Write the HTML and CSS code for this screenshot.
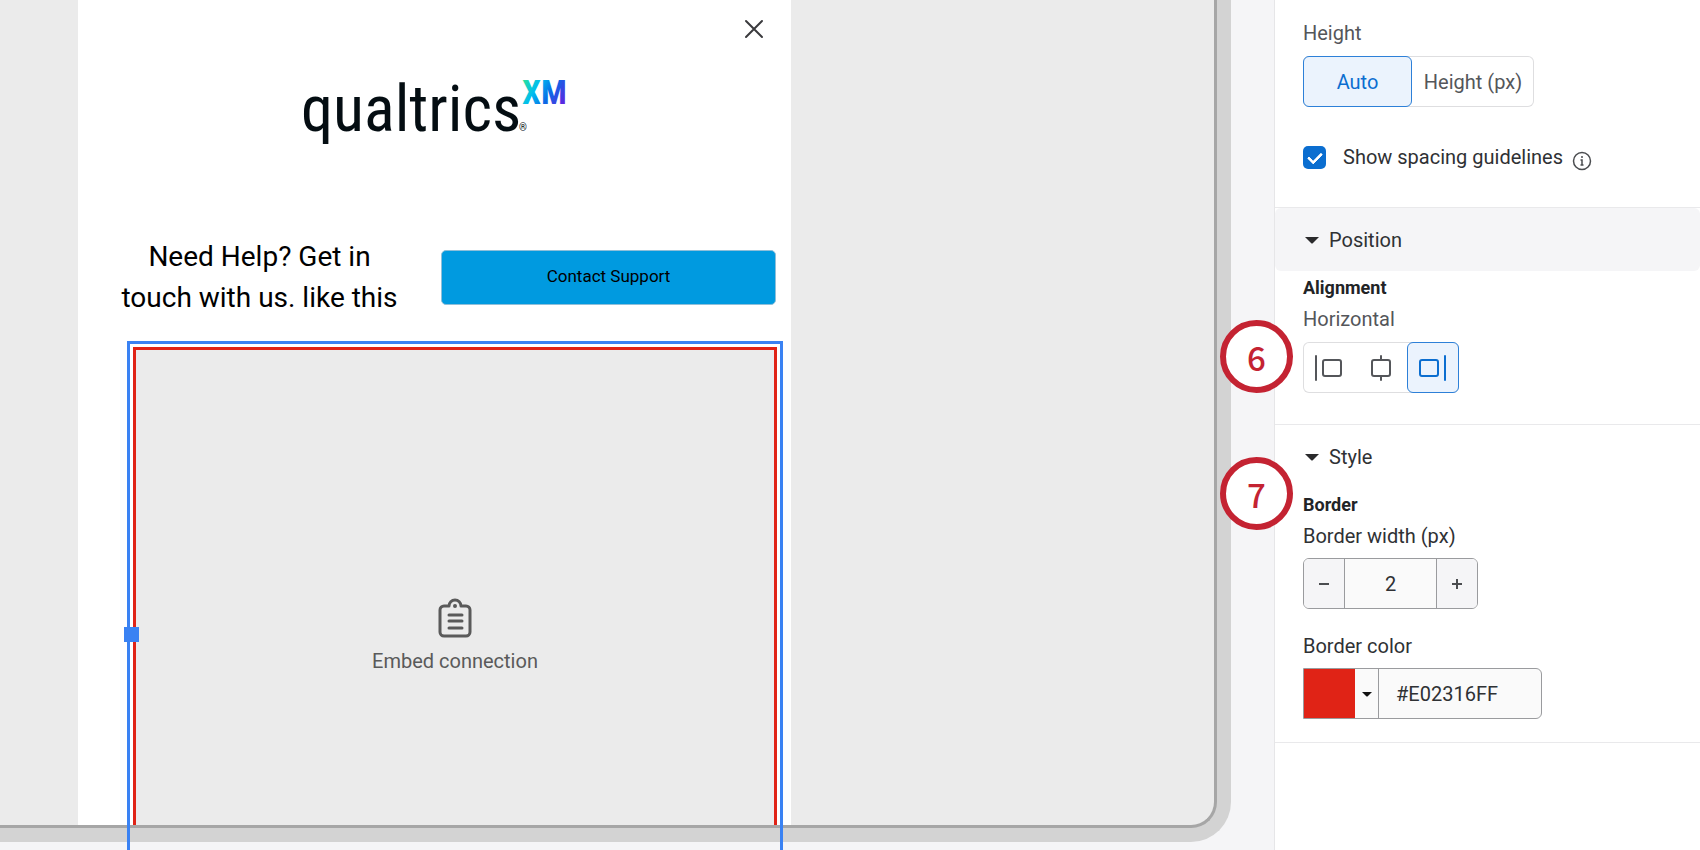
FILE: index.html
```html
<!DOCTYPE html>
<html lang="en">
<head>
    <meta charset="UTF-8">
    <meta name="viewport" content="width=device-width, initial-scale=1.0">
    <title>Creative Editor</title>
    <link rel="stylesheet" href="styles.css">
</head>
<body>
    <main class="workspace">
        <div class="device">
            <div class="screen">
                <div class="popup">
                    <div class="popup-top">
                        <button class="close" aria-label="Close">
                            <svg width="20" height="20" viewBox="0 0 20 20" fill="none" stroke="#3a3a3d" stroke-width="2" stroke-linecap="round"><path d="M2 2l16 16M18 2L2 18"/></svg>
                        </button>
                    </div>
                    <svg class="logo" width="268" height="84" viewBox="0 0 268 84" role="img" aria-label="Qualtrics XM">
                        <defs>
                            <linearGradient id="xm" gradientUnits="userSpaceOnUse" x1="222" y1="6" x2="264" y2="30">
                                <stop offset="0" stop-color="#27e0a0"/>
                                <stop offset="0.3" stop-color="#00bdf0"/>
                                <stop offset="0.6" stop-color="#0a6be6"/>
                                <stop offset="1" stop-color="#6a1be0"/>
                            </linearGradient>
                        </defs>
                        <text class="logo-name" x="-1" y="57">qualtrics</text>
                        <text class="logo-xm" x="220" y="30">XM</text>
                        <text class="logo-reg" x="217" y="57">®</text>
                    </svg>
                    <div class="help-row">
                        <p class="help-text">Need Help? Get in<br>touch with us. like this</p>
                        <button class="contact">Contact Support</button>
                    </div>
                    <div class="embed-slot">
                        <div class="embed-clip">
                            <div class="embed">
                                <svg width="34" height="40" viewBox="0 0 34 40" fill="none" stroke="#5a5a5a" stroke-width="2" stroke-linecap="round" stroke-linejoin="round">
                                    <path stroke-width="3" d="M11 8H6a4 4 0 0 0-4 4v22a4 4 0 0 0 4 4h22a4 4 0 0 0 4-4V12a4 4 0 0 0-4-4h-5a6 6 0 0 0-12 0z"/>
                                    <circle cx="17" cy="8" r="1" fill="#5a5a5a"/>
                                    <path stroke-width="3" d="M11 17h13M11 23h13M11 30h13"/>
                                </svg>
                                <span>Embed connection</span>
                            </div>
                        </div>
                        <div class="selection"><span class="handle"></span></div>
                    </div>
                </div>
            </div>
        </div>
    </main>

    <aside class="panel">
        <section class="group size">
            <span class="label muted">Height</span>
            <div class="segmented">
                <button class="auto active">Auto</button>
                <button class="px">Height (px)</button>
            </div>
            <div class="check-row">
                <input type="checkbox" id="guidelines" checked>
                <label for="guidelines">Show spacing guidelines</label>
                <svg class="info" width="20" height="20" viewBox="0 0 20 20" fill="none" stroke="#4b4d50"><circle cx="10" cy="10" r="8.500" stroke-width="1.500"/><path stroke-width="1.500" d="M8.500 9H10v5M8.500 14h3"/><circle cx="10" cy="6" r="1" fill="#4b4d50" stroke="none"/></svg>
            </div>
        </section>

        <section class="group">
            <button class="header hovered">
                <svg width="14" height="8" viewBox="0 0 14 8"><path d="M0 1h14L8 7q-1 1-2 0z" fill="#2a2a2c"/></svg>
                Position
            </button>
            <div class="content position">
                <h3>Alignment</h3>
                <span class="label muted">Horizontal</span>
                <div class="segmented icons">
                    <button aria-label="Align left">
                        <svg width="30" height="28" viewBox="0 0 30 28" fill="none" stroke="#54565a" stroke-width="2" stroke-linecap="round"><path d="M2 2v24"/><rect x="9" y="6" width="18" height="16" rx="2"/></svg>
                    </button>
                    <button aria-label="Align center">
                        <svg width="30" height="28" viewBox="0 0 30 28" fill="none" stroke="#54565a" stroke-width="2" stroke-linecap="round"><path d="M15 2v4M15 22v4"/><rect x="6" y="6" width="18" height="16" rx="2"/></svg>
                    </button>
                    <button class="active" aria-label="Align right">
                        <svg width="30" height="28" viewBox="0 0 30 28" fill="none" stroke="#0b6ed0" stroke-width="2" stroke-linecap="round"><path d="M27 2v24"/><rect x="2" y="6" width="18" height="16" rx="2"/></svg>
                    </button>
                </div>
            </div>
            <span class="step step-position">6</span>
        </section>

        <section class="group">
            <button class="header">
                <svg width="14" height="8" viewBox="0 0 14 8"><path d="M0 1h14L8 7q-1 1-2 0z" fill="#2a2a2c"/></svg>
                Style
            </button>
            <div class="content">
                <h3>Border</h3>
                <label class="label" for="border-width">Border width (px)</label>
                <div class="stepper">
                    <button aria-label="Decrease"><svg width="12" height="12" viewBox="0 0 12 12" stroke="#4b4d50" stroke-width="2"><path d="M1 6h10"/></svg></button>
                    <input type="text" id="border-width" value="2">
                    <button aria-label="Increase"><svg width="12" height="12" viewBox="0 0 12 12" stroke="#4b4d50" stroke-width="2"><path d="M1 6h10M6 1v10"/></svg></button>
                </div>
                <label class="label" for="border-color">Border color</label>
                <div class="color-field">
                    <button aria-label="Pick color">
                        <span class="swatch"></span>
                        <svg width="10" height="6" viewBox="0 0 10 6"><path d="M0 1h10L6 5q-1 1-2 0z" fill="#111"/></svg>
                    </button>
                    <input type="text" id="border-color" value="#E02316FF">
                </div>
            </div>
            <span class="step step-style">7</span>
        </section>
    </aside>
</body>
</html>
```
FILE: styles.css
```css
* {
    box-sizing: border-box;
}
body {
    margin: 0;
    height: 100vh;
    display: flex;
    overflow: hidden;
    background: #f5f5f7;
    font-family: Roboto, "Liberation Sans", sans-serif;
    font-size: 20px;
    line-height: 24px;
    color: #2f3134;
}
button, input {
    font: inherit;
    color: inherit;
    margin: 0;
    padding: 0;
    border: none;
    background: none;
}
button {
    cursor: pointer;
}
svg {
    display: block;
    flex: none;
}

/* canvas */
.workspace {
    flex: 1;
    min-width: 0;
    padding: 0 43px 8px 0;
    overflow: hidden;
}
.device {
    height: 100%;
    border: solid #d3d3d3;
    border-width: 0 14px 14px 0;
    border-radius: 0 0 40px 0;
    background: #d3d3d3;
}
.screen {
    height: 100%;
    padding-left: 78px;
    border: solid #a6a6a6;
    border-width: 0 3px 3px 0;
    border-radius: 0 0 26px 0;
    background: #ebebeb;
}
.popup {
    width: 713px;
    height: 100%;
    display: flex;
    flex-direction: column;
    background: #fff;
}
.popup-top {
    display: flex;
    justify-content: flex-end;
    padding: 19px 27px 35px;
}
.logo {
    margin-left: 224px;
    overflow: visible;
}
.logo-name {
    font-family: "Roboto Condensed", "Liberation Sans", sans-serif;
    font-size: 64px;
    fill: #040d12;
}
.logo-xm {
    font-family: "Roboto Condensed", "Liberation Sans", sans-serif;
    font-size: 34px;
    font-weight: bold;
    fill: url(#xm);
}
.logo-reg {
    font-size: 10px;
    fill: #040d12;
}
.help-row {
    display: flex;
    align-items: center;
    padding: 78px 15px 0 0;
}
.help-text {
    flex: 1;
    margin: 0;
    text-align: center;
    font-size: 28px;
    line-height: 41px;
    color: #000;
}
.contact {
    width: 335px;
    height: 55px;
    padding-bottom: 2px;
    border: 1px solid #8fbfd9;
    border-radius: 5px;
    background: #009ae0;
    font-size: 17px;
    color: #000;
}
.embed-slot {
    position: relative;
    flex: 1;
    min-height: 0;
    margin: 29px 14px 0 55px;
}
.embed-clip {
    height: 100%;
    overflow: hidden;
}
.embed {
    height: 575px;
    display: flex;
    flex-direction: column;
    align-items: center;
    justify-content: center;
    gap: 11px;
    padding-top: 2px;
    border: 3px solid #e02316;
    background: #ebebeb;
    color: #5a5a5a;
}
.selection {
    position: absolute;
    top: -6px;
    left: -6px;
    right: -6px;
    height: 587px;
    border: 3px solid #3a82f3;
}
.handle {
    position: absolute;
    left: -6px;
    top: 50%;
    width: 15px;
    height: 15px;
    margin-top: -8px;
    background: #3a82f3;
}

/* settings panel */
.panel {
    width: 426px;
    border-left: 1px solid #e6e6e8;
    background: #fff;
}
.group {
    position: relative;
    border-bottom: 1px solid #e9e9eb;
}
.size {
    padding: 21px 28px 38px;
}
.label {
    display: block;
    margin-bottom: 10px;
}
.muted {
    margin-bottom: 11px;
    color: #54565a;
}
.segmented {
    display: flex;
    width: max-content;
    height: 51px;
    border-radius: 6px;
    box-shadow: inset 0 0 0 1px #dedee0;
    color: #54565a;
}
.segmented button {
    display: flex;
    align-items: center;
    justify-content: center;
    border-radius: 6px;
}
.segmented .auto {
    width: 109px;
}
.segmented .px {
    width: 122px;
}
.segmented .active {
    border: 1px solid #2d80d8;
    background: #ebf3fd;
    color: #0b6ed0;
}
.icons button {
    width: 52px;
}
.check-row {
    display: flex;
    align-items: center;
    height: 24px;
    margin-top: 38px;
}
.check-row input {
    appearance: none;
    width: 23px;
    height: 23px;
    border-radius: 5px;
    background: #0b6ed0;
    display: grid;
    place-items: center;
}
.check-row input:checked::before {
    content: "";
    width: 11px;
    height: 6px;
    border: solid #fff;
    border-width: 0 0 3px 3px;
    border-radius: 1px;
    transform: translateY(-1px) rotate(-45deg);
}
.check-row label {
    margin-left: 17px;
}
.info {
    margin: 6px 0 0 9px;
    align-self: flex-start;
}
.header {
    display: flex;
    align-items: center;
    gap: 10px;
    width: 100%;
    height: 63px;
    padding: 0 30px;
    border-radius: 6px;
}
.hovered {
    background: #f5f5f7;
}
.content {
    padding: 5px 28px 23px;
}
.position {
    padding-bottom: 31px;
}
h3 {
    margin: 0 0 7px;
    font-size: 18px;
    font-weight: bold;
    line-height: 24px;
    color: #222426;
}
.stepper {
    display: flex;
    width: 175px;
    height: 51px;
    margin-bottom: 25px;
    border: 1px solid #9a9b9e;
    border-radius: 6px;
    overflow: hidden;
}
.stepper button {
    width: 40px;
    display: grid;
    place-items: center;
    background: #f5f5f7;
}
.stepper input {
    flex: 1;
    min-width: 0;
    border: solid #9a9b9e;
    border-width: 0 1px;
    background: #fafafa;
    text-align: center;
}
.color-field {
    display: flex;
    width: 239px;
    height: 51px;
    border: 1px solid #9a9b9e;
    border-radius: 0 6px 6px 0;
    background: #fafafa;
}
.color-field button {
    display: flex;
    align-items: center;
    gap: 7px;
    width: 75px;
    border-right: 1px solid #9a9b9e;
}
.swatch {
    width: 51px;
    height: 49px;
    background: #e02316;
}
.color-field input {
    flex: 1;
    min-width: 0;
    padding-left: 17px;
}

/* numbered callouts on the panel's left edge */
.step {
    position: absolute;
    left: -55px;
    width: 73px;
    height: 73px;
    display: grid;
    place-items: center;
    border: 6px solid #c42332;
    border-radius: 50%;
    background: #fff;
    font-family: "Noto Sans CJK SC", "Noto Sans", sans-serif;
    font-size: 33px;
    font-weight: 500;
    color: #c42332;
}
.step-position {
    top: 112px;
}
.step-style {
    top: 32px;
}
```
